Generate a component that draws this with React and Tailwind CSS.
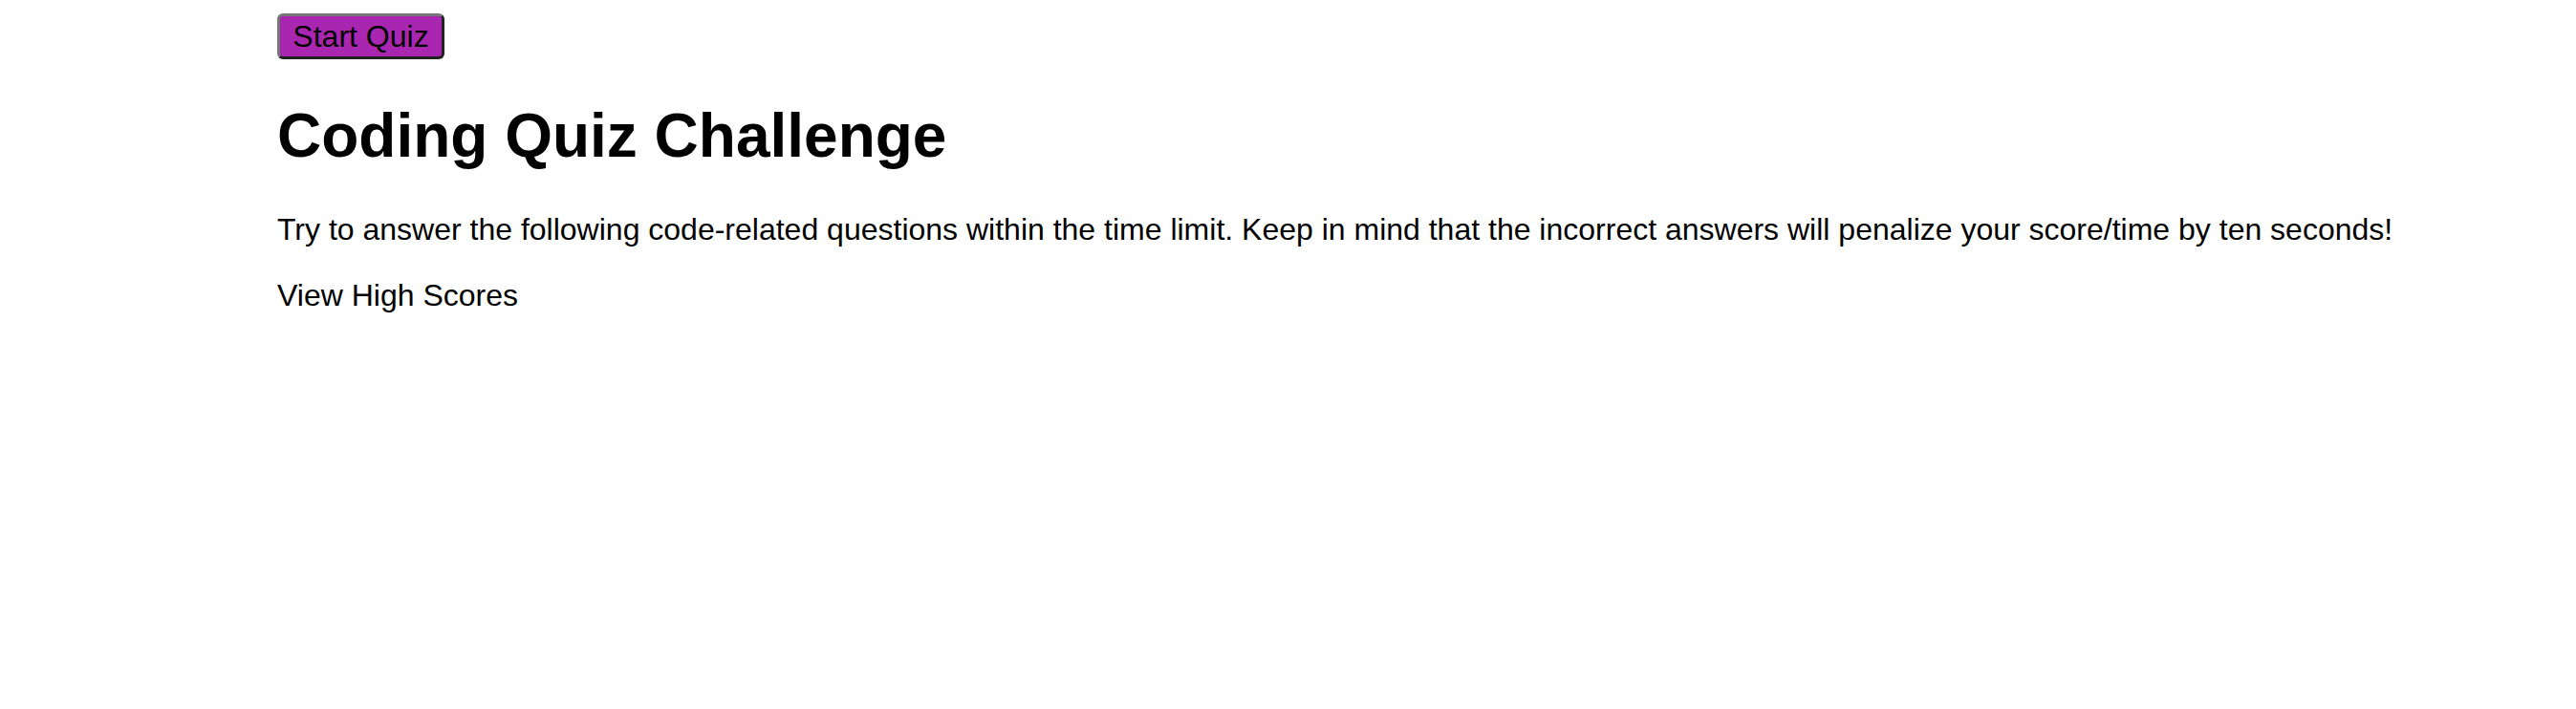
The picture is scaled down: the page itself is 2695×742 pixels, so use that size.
export default function App() {
  return (
    <div className="min-h-[742px] bg-white pl-[290px] pt-[14px] text-black" style={{}}>
      <div className="font-['Liberation_Sans',Arial,sans-serif]">
        <button className="m-0 box-border h-[48px] w-[175px] rounded-[6px] border-[3px] border-solid border-t-[#767676] border-l-[#767676] border-b-[#222222] border-r-[#222222] bg-[#a926b0] p-0 text-[32px] leading-[normal] text-black">
          Start Quiz
        </button>
        <h1 className="mt-[43px] mb-[43px] text-[64px] font-bold leading-[normal]">
          Coding Quiz Challenge
        </h1>
        <p className="m-0 whitespace-nowrap text-[32px] leading-[normal]">
          Try to answer the following code-related questions within the time limit. Keep in mind that the incorrect answers will penalize your score/time by ten seconds!
        </p>
        <p className="mt-[32px] text-[32px] leading-[normal]">View High Scores</p>
      </div>
    </div>
  );
}
